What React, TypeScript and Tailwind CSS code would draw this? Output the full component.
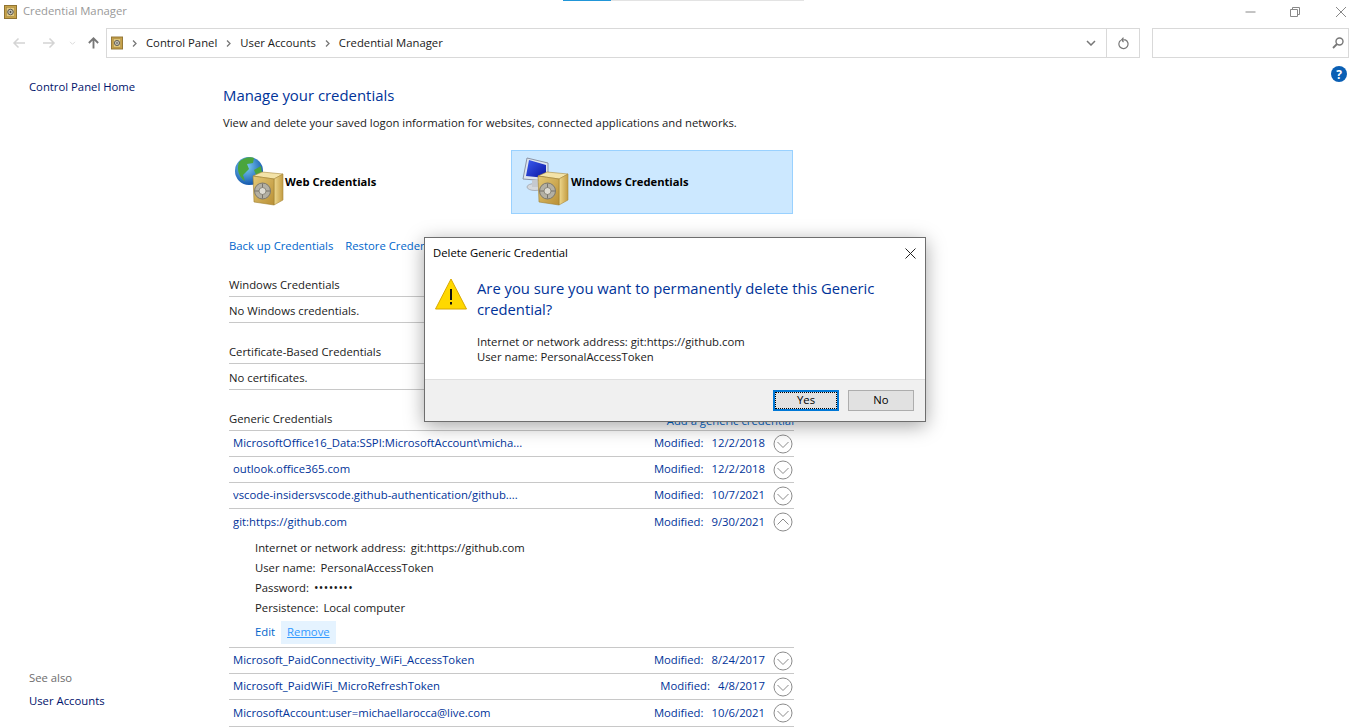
const font = "font-['Open_Sans','Noto_Sans',sans-serif]";

function Safe({ x = 0, y = 0 }: { x?: number; y?: number }) {
  return (
    <g transform={`translate(${x} ${y})`}>
      <path d="M0 5 L9 1 L30 3 L21 8 Z" fill="#f3e3a8" stroke="#a98a3c" strokeWidth=".6" />
      <path d="M21 8 L30 3 V29 L21 34 Z" fill="url(#safeSide)" stroke="#a98a3c" strokeWidth=".6" />
      <path d="M0 5 L21 8 V34 L1 31 Z" fill="url(#safeFront)" stroke="#a07f30" strokeWidth=".6" />
      <circle cx="9.5" cy="20" r="8" fill="#b3b0a4" stroke="#7c786c" />
      <circle cx="9.5" cy="20" r="3.5" fill="#dedcd3" stroke="#7c786c" strokeWidth=".8" />
      <path d="M9.5 12.5V16.5M9.5 23.5V27.5M2 20H6M13 20H17" stroke="#77736a" strokeWidth="1" />
    </g>
  );
}

function SmallSafe({ className }: { className: string }) {
  return (
    <svg viewBox="0 0 13 14" className={className}>
      <rect x=".5" y=".5" width="12" height="13" fill="#c7a148" stroke="#8f7332" />
      <rect x="2.5" y="2.5" width="8" height="9" fill="#e2c980" stroke="#a0853f" strokeWidth=".5" />
      <circle cx="6.5" cy="7" r="2.8" fill="#c4c1b4" stroke="#5d5a50" />
      <circle cx="6.5" cy="7" r=".9" fill="#4a4740" />
    </svg>
  );
}

function CredIcon({ kind }: { kind: "web" | "windows" }) {
  return (
    <svg viewBox="0 0 52 52" className="h-[52px] w-[52px]">
      <defs>
        <radialGradient id="globe" cx="40%" cy="35%" r="70%">
          <stop offset="0" stopColor="#7fd0f5" />
          <stop offset="1" stopColor="#0c4fa8" />
        </radialGradient>
        <linearGradient id="safeFront" x1="0" y1="0" x2="1" y2="1">
          <stop offset="0" stopColor="#e4c976" />
          <stop offset="1" stopColor="#b98f35" />
        </linearGradient>
        <linearGradient id="safeSide" x1="0" y1="0" x2="1" y2="0">
          <stop offset="0" stopColor="#efd98f" />
          <stop offset="1" stopColor="#c39c42" />
        </linearGradient>
        <linearGradient id="screen" x1="0" y1="0" x2="1" y2="1">
          <stop offset="0" stopColor="#3c5cf0" />
          <stop offset="1" stopColor="#0a14a0" />
        </linearGradient>
      </defs>
      {kind === "web" ? (
        <g>
          <circle cx="15" cy="15" r="14" fill="url(#globe)" />
          <path d="M5 6C9 2 16 0 20 2L19 7 13 8 15 13 9 19 11 25C6 22 2 15 5 6Z" fill="#4aa53c" />
          <path d="M20 14L27 10 28 17 23 21Z" fill="#4aa53c" />
        </g>
      ) : (
        <g>
          <path d="M6 2 L27 7 V25 L2 23Z" fill="#dfe5ee" stroke="#8a93a6" />
          <path d="M8 4 L25 9 V22 L5 20Z" fill="url(#screen)" />
          <ellipse cx="14" cy="31" rx="8" ry="3.5" fill="#d5d8dc" stroke="#aab0b8" />
          <rect x="11" y="24" width="6" height="7" fill="#c5c9cf" />
        </g>
      )}
      <Safe x={kind === "web" ? 19 : 17} y={15} />
    </svg>
  );
}

function Chevron({ up = false }: { up?: boolean }) {
  return (
    <svg viewBox="0 0 20 20" className="h-5 w-5 shrink-0 text-[#8c8c8c]">
      <circle cx="10" cy="10" r="9" fill="none" stroke="currentColor" strokeWidth="1" />
      <path d={up ? "M4.5 12.5 L10 7 L15.5 12.5" : "M4.5 8 L10 13.5 L15.5 8"} fill="none" stroke="currentColor" strokeWidth="1" />
    </svg>
  );
}

function CredRow({ name, date, up = false }: { name: string; date: string; up?: boolean }) {
  return (
    <div className="flex h-[26px] items-center pl-1 text-[#003399]">
      <span className="flex-1 truncate">{name}</span>
      <span>Modified:</span>
      <span className="ml-[8px]">{date}</span>
      <span className="ml-[8px] mr-px flex">
        <Chevron up={up} />
      </span>
    </div>
  );
}

function Section({ title, empty }: { title: string; empty: string }) {
  return (
    <div className="mt-[15px]">
      <div className="flex h-[26px] items-center border-b border-[#c8c8c8] pt-[4px]">{title}</div>
      <div className="flex h-[26px] items-center border-b border-[#c8c8c8] pt-[3px]">{empty}</div>
    </div>
  );
}

function Crumb() {
  return (
    <svg viewBox="0 0 5 7" className="mx-[9px] h-[7px] w-[5px] text-[#777]">
      <path d="M1 .5L4 3.5L1 6.5" fill="none" stroke="currentColor" strokeWidth="1.3" />
    </svg>
  );
}

export default function App() {
  return (
    <div className={`${font} relative h-[727px] w-[1349px] overflow-hidden bg-white text-[11.3px] text-[#1a1a1a]`}>
      {/* strip of the window behind */}
      <div className="absolute left-[563px] top-0 flex h-px">
        <div className="w-12 bg-[#2196d8]" />
        <div className="w-[193px] bg-[#e3e3e3]" />
      </div>

      <div className="flex h-[23px] items-center pl-1">
        <SmallSafe className="h-[14px] w-[13px]" />
        <span className="ml-[6px] flex-1 text-[#999]">Credential Manager</span>
        <svg viewBox="0 0 10 10" className="h-[10px] w-[11px] text-[#888]">
          <path d="M0 5H10" stroke="currentColor" />
        </svg>
        <svg viewBox="0 0 10 10" className="ml-[34px] h-[10px] w-[10px] text-[#888]">
          <path d="M2.5 2.5V.5H9.5V7.5H7.5M.5 2.5H7.5V9.5H.5Z" fill="none" stroke="currentColor" />
        </svg>
        <svg viewBox="0 0 10 10" className="ml-[36px] mr-[3px] h-[10px] w-[10px] text-[#888]">
          <path d="M0 0L10 10M10 0L0 10" stroke="currentColor" />
        </svg>
      </div>

      <div className="mt-[5px] flex h-[30px] items-center">
        <svg viewBox="0 0 14 12" className="ml-[12px] h-3 w-[14px] text-[#d4d4d4]">
          <path d="M13 6H2M6.5 1.5L2 6L6.5 10.5" fill="none" stroke="currentColor" strokeWidth="1.5" />
        </svg>
        <svg viewBox="0 0 14 12" className="ml-4 h-3 w-[14px] text-[#d4d4d4]">
          <path d="M1 6H12M7.5 1.5L12 6L7.5 10.5" fill="none" stroke="currentColor" strokeWidth="1.5" />
        </svg>
        <svg viewBox="0 0 8 6" className="ml-[13px] h-[5px] w-[7px] text-[#d4d4d4]">
          <path d="M1 1L4 4L7 1" fill="none" stroke="currentColor" />
        </svg>
        <svg viewBox="0 0 14 14" className="ml-[11px] h-[14px] w-[13px] text-[#777]">
          <path d="M7 13V2M2 7L7 2L12 7" fill="none" stroke="currentColor" strokeWidth="2" />
        </svg>
        <div className="ml-[6px] flex h-[30px] w-[1034px] items-center border border-[#d9d9d9] pl-[4px]">
          <SmallSafe className="h-[14px] w-[12px]" />
          <Crumb />
          <span>Control Panel</span>
          <Crumb />
          <span>User Accounts</span>
          <Crumb />
          <span className="flex-1">Credential Manager</span>
          <svg viewBox="0 0 10 6" className="mr-[10px] h-[6px] w-[10px] text-[#777]">
            <path d="M1 1L5 5L9 1" fill="none" stroke="currentColor" strokeWidth="1.5" />
          </svg>
          <div className="flex h-full w-[33px] items-center justify-center border-l border-[#d9d9d9]">
            <svg viewBox="0 0 12 14" className="h-[13px] w-[11px] text-[#777]">
              <path d="M3 3.5A5 5 0 1 0 8 3H5M6 .5L4 3L6 5.5" fill="none" stroke="currentColor" strokeWidth="1.3" />
            </svg>
          </div>
        </div>
        <div className="ml-3 flex h-[30px] w-[197px] items-center justify-end border border-[#d9d9d9] pr-[4px]">
          <svg viewBox="0 0 12 12" className="h-3 w-3 text-[#777]">
            <circle cx="7.5" cy="4.5" r="3.5" fill="none" stroke="currentColor" strokeWidth="1.4" />
            <path d="M5 7L1 11" stroke="currentColor" strokeWidth="1.8" />
          </svg>
        </div>
      </div>

      <div className="flex">
        <aside className="flex h-[669px] w-[223px] flex-col pl-[29px] pt-[21px] text-[#00136b]">
          <div>Control Panel Home</div>
          <div className="mt-auto text-[#6d6d6d]">See also</div>
          <div className="mb-[17px] mt-[6px]">User Accounts</div>
        </aside>

        <main className="w-[571px] pt-[27px]">
          <h1 className="text-[14.9px] leading-[20px] text-[#003399]">Manage your credentials</h1>
          <p className="mt-[9px] leading-[17px]">
            View and delete your saved logon information for websites, connected applications and networks.
          </p>

          <div className="mt-[19px] flex">
            <div className="flex h-16 w-[288px] items-center pl-[11px] text-[11.2px] font-bold text-black">
              <CredIcon kind="web" />
              <span className="-ml-[1px]">Web Credentials</span>
            </div>
            <div className="flex h-16 w-[282px] items-center border border-[#99d1ff] bg-[#cce8ff] pl-[9px] text-[11.2px] font-bold text-black">
              <CredIcon kind="windows" />
              <span className="-ml-[2px]">Windows Credentials</span>
            </div>
          </div>

          <div className="ml-[6px] mt-[23px] flex gap-3 pb-[2px] leading-[17px] text-[#0066cc]">
            <span>Back up Credentials</span>
            <span>Restore Credentials</span>
          </div>

          <div className="ml-[6px]">
            <Section title="Windows Credentials" empty="No Windows credentials." />
            <Section title="Certificate-Based Credentials" empty="No certificates." />

            <div className="mt-[15px] flex h-[26px] items-center justify-between border-b border-[#c8c8c8] pt-[4px]">
              <span>Generic Credentials</span>
              <span className="mt-[3px] text-[#0066cc]">Add a generic credential</span>
            </div>
            <div className="divide-y divide-[#c8c8c8] border-b border-[#c8c8c8]">
              <CredRow name="MicrosoftOffice16_Data:SSPI:MicrosoftAccount\micha..." date="12/2/2018" />
              <CredRow name="outlook.office365.com" date="12/2/2018" />
              <CredRow name="vscode-insidersvscode.github-authentication/github...." date="10/7/2021" />
              <div>
                <CredRow name="git:https://github.com" date="9/30/2021" up />
                <div className="h-[112px] pl-[26px] pt-[3px]">
                  <div className="flex h-5 items-center gap-[5px]"><span>Internet or network address:</span><span>git:https://github.com</span></div>
                  <div className="flex h-5 items-center gap-[5px]"><span>User name:</span><span>PersonalAccessToken</span></div>
                  <div className="flex h-5 items-center gap-[5px]"><span>Password:</span><span className="text-[12px] tracking-[0.4px]">••••••••</span></div>
                  <div className="flex h-5 items-center gap-[5px]"><span>Persistence:</span><span>Local computer</span></div>
                  <div className="mt-[3px] flex h-[23px] items-center text-[#0066cc]">
                    <span>Edit</span>
                    <span className="ml-[6px] flex h-[23px] items-center bg-[#e5f3ff] px-[6px] text-[#3399ff] underline">Remove</span>
                  </div>
                </div>
              </div>
              <CredRow name="Microsoft_PaidConnectivity_WiFi_AccessToken" date="8/24/2017" />
              <CredRow name="Microsoft_PaidWiFi_MicroRefreshToken" date="4/8/2017" />
              <CredRow name="MicrosoftAccount:user=michaellarocca@live.com" date="10/6/2021" />
            </div>
          </div>
        </main>

        <div className="flex-1 pr-[2px] pt-[8px]">
          <svg viewBox="0 0 16 16" className="ml-auto h-4 w-4">
            <circle cx="8" cy="8" r="8" fill="#0a5fb4" />
            <text x="8" y="12.5" textAnchor="middle" fontSize="12" fontWeight="700" fill="#fff" fontFamily="Open Sans, sans-serif">?</text>
          </svg>
        </div>
      </div>

      {/* confirm dialog */}
      <div className="absolute left-[424px] top-[237px] h-[185px] w-[502px] border border-[#6e6e6e] bg-white shadow-[0_4px_18px_rgba(0,0,0,0.35)]">
        <div className="flex h-[30px] items-center justify-between pl-2 pr-[9px] text-black">
          <span>Delete Generic Credential</span>
          <svg viewBox="0 0 11 11" className="h-[11px] w-[11px]">
            <path d="M.5 .5L10.5 10.5M10.5 .5L.5 10.5" stroke="#222" />
          </svg>
        </div>
        <div className="flex h-[111px] pl-[10px] pt-[10px]">
          <svg viewBox="0 0 32 32" className="h-8 w-8 shrink-0">
            <path d="M16 1L31.5 31H.5Z" fill="#ffd800" stroke="#d9a900" />
            <rect x="15" y="11" width="2" height="11" fill="#111" />
            <rect x="15" y="24" width="2" height="2.5" fill="#111" />
          </svg>
          <div className="ml-[10px] w-[440px]">
            <div className="text-[14.8px] leading-[21px] text-[#003399]">
              Are you sure you want to permanently delete this Generic credential?
            </div>
            <div className="mt-[14px] leading-[15px] text-[#1a1a1a]">
              <div>Internet or network address: git:https://github.com</div>
              <div>User name: PersonalAccessToken</div>
            </div>
          </div>
        </div>
        <div className="flex h-[42px] items-center justify-end gap-[9px] border-t border-[#dfdfdf] bg-[#f0f0f0] pr-[11px] text-black">
          <button className="flex h-[21px] w-[66px] items-center justify-center border-2 border-[#0078d7] bg-[#e1e1e1] outline-1 -outline-offset-3 outline-dotted outline-black">Yes</button>
          <button className="flex h-[21px] w-[66px] items-center justify-center border border-[#adadad] bg-[#e1e1e1]">No</button>
        </div>
      </div>
    </div>
  );
}
